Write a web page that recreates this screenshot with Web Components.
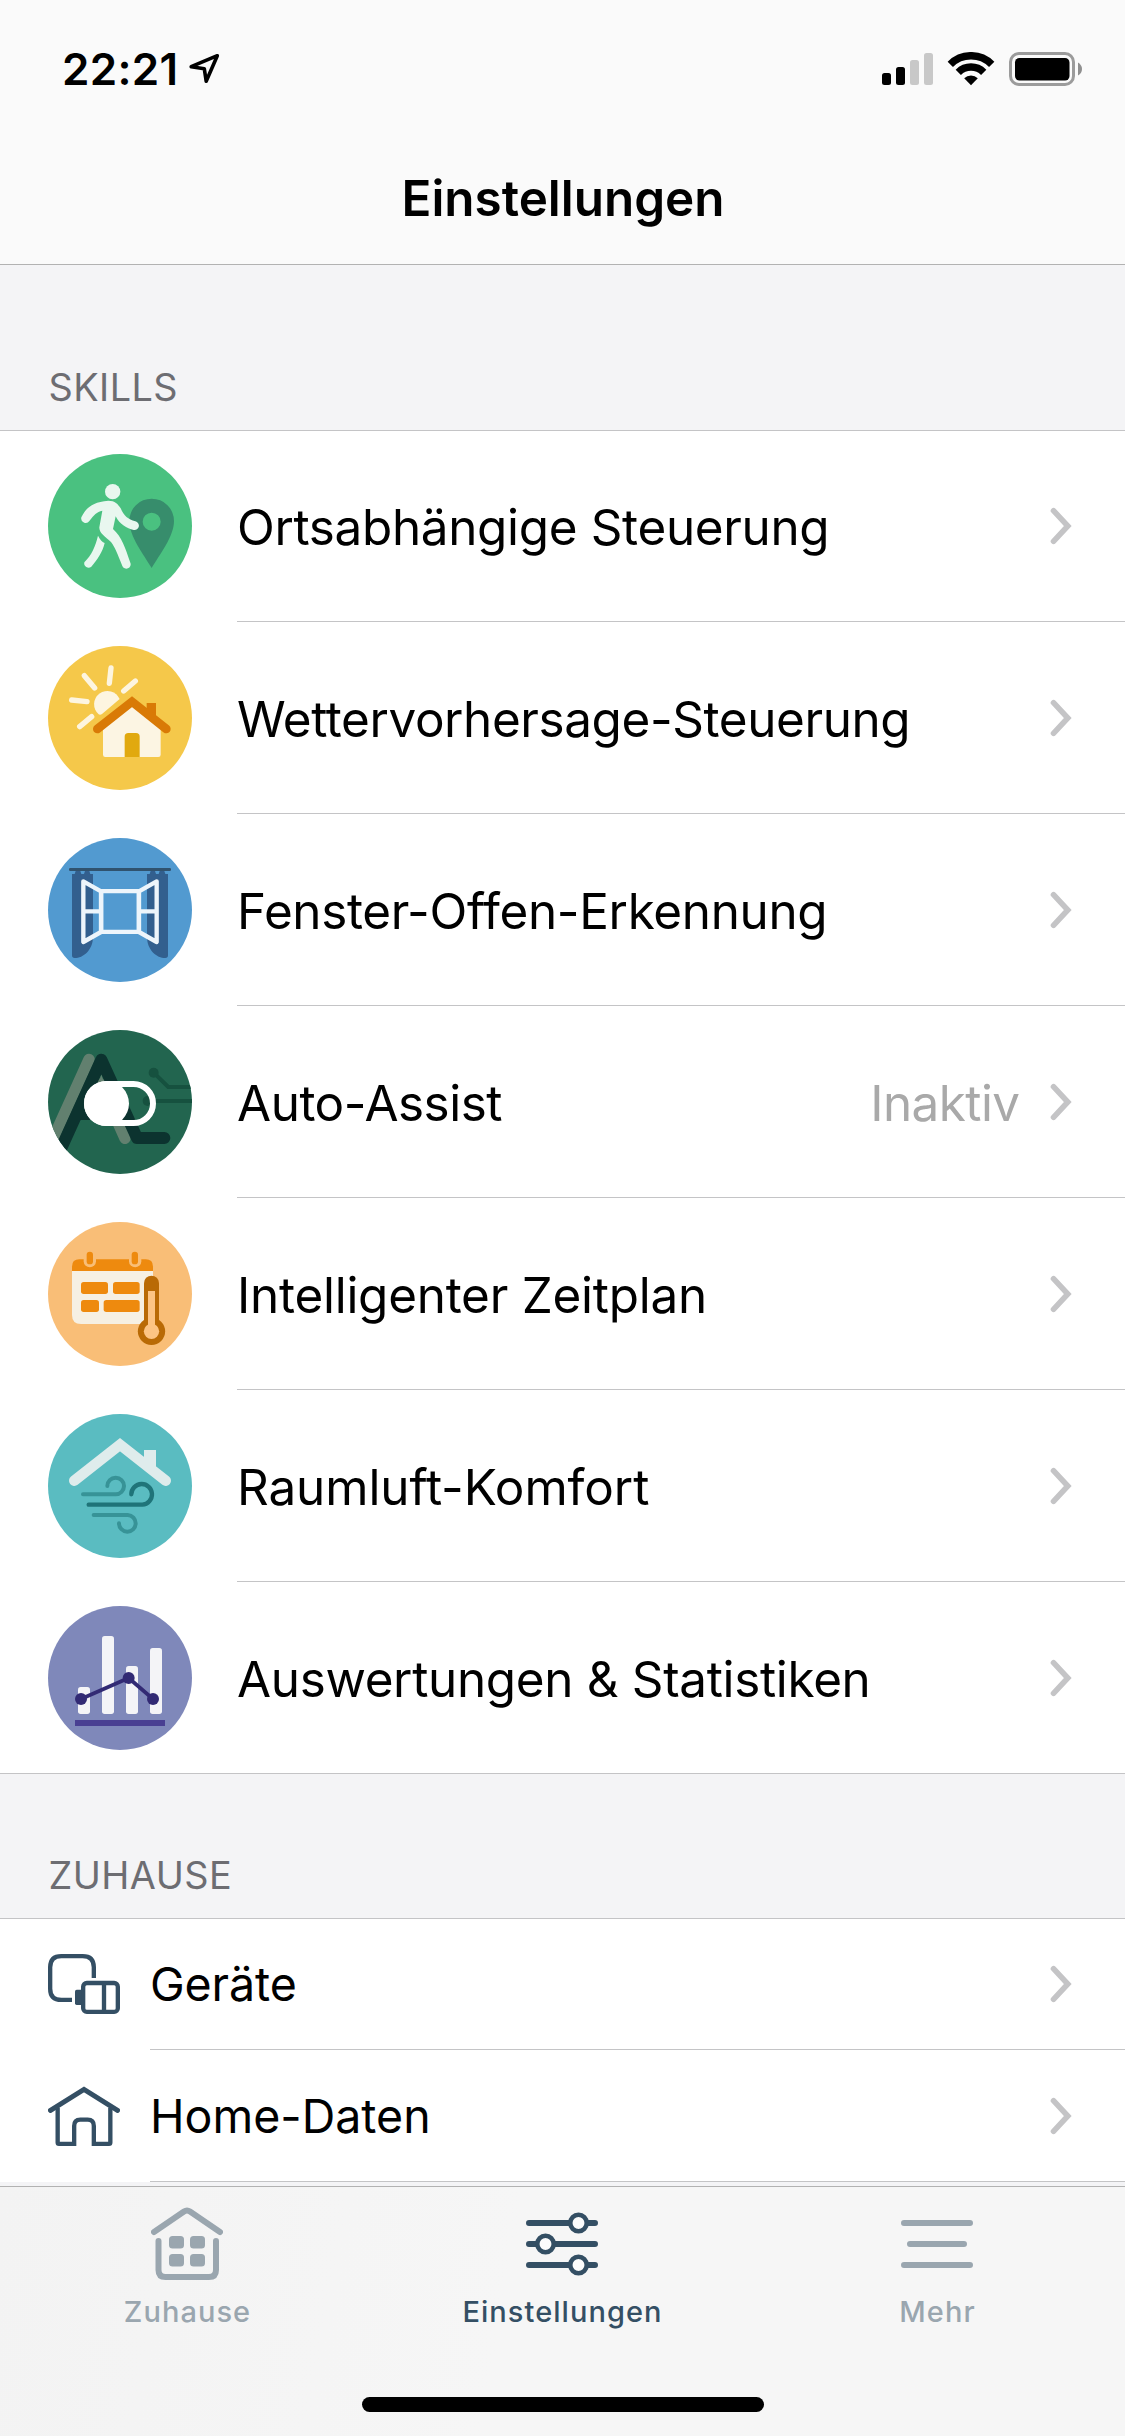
<!DOCTYPE html>
<html lang="de">
<head>
<meta charset="utf-8">
<title>Einstellungen</title>
<style>
html,body{margin:0;padding:0}
body{width:1125px;height:2436px;overflow:hidden;background:#f4f4f6;font-family:Inter,"Liberation Sans",sans-serif;color:#000}
</style>
</head>
<body>
<settings-screen></settings-screen>
<script>
const define = (name, html, setup) => customElements.define(name, class extends HTMLElement {
  connectedCallback() {
    if (this.shadowRoot) return;
    const t = document.createElement('template');
    t.innerHTML = typeof html === 'function' ? html(this) : html;
    this.attachShadow({mode: 'open'}).append(t.content.cloneNode(true));
    if (setup) setup(this);
  }
});

const skill = (y, color, body) => `<svg width="144" height="144" viewBox="54 ${y} 432 432"><circle cx="270" cy="${y + 216}" r="216" fill="${color}"/>${body}</svg>`;
const curtain = `<path fill="#325f8e" d="M126 162H134L137 153H151L154 162H162L165 153H178L181 162H189V350C189 390 160 414 134 414Q126 414 126 406Z"/>`;
const sash = `<path d="M160 184L213 214V336L160 366ZM160 274H213"/>`;

const ICONS = {
  location: skill(42, '#4ac180', `
    <path fill="#378d6c" fill-rule="evenodd" d="M365 384C342 345 298 290 298 243A67 67 0 0 1 432 243C432 290 388 345 365 384ZM338 245a27 27 0 1 0 54 0a27 27 0 1 0-54 0Z"/>
    <g fill="#e9f7ef"><circle cx="248" cy="155" r="23"/>
    <path d="M154 232C168 205 184 186 235 182C255 182 264 192 272 205C282 228 294 238 316 244A13 13 0 0 1 311 270C290 265 270 254 257 229L249 267C276 292 285 322 301 368A13 13 0 0 1 277 378C262 340 255 322 243 306C225 290 207 278 208 262L217 212C200 215 192 225 178 243A13.500 13.500 0 0 1 154 232Z"/>
    <path d="M204 287C210 300 218 306 224 309C218 335 202 360 184 380A13 13 0 0 1 163 367C185 345 196 320 204 287Z"/></g>`),
  weather: skill(618, '#f5c84a', `
    <g stroke="#fdf5e0" stroke-width="16" stroke-linecap="round"><path d="M243 684L238 730M163 707L194 744M316 723L281 753M125 780L171 785M149 860L185 830"/></g>
    <path fill="#fdf5e0" d="M269 777A40 40 0 1 0 206 823Q211 826 217 821Z"/>
    <path fill="#fcf5e3" d="M219 862L306 795L392 862V944Q392 951 385 951H226Q219 951 219 944Z"/>
    <path fill="#e1a90f" d="M284 951V890Q284 879 295 879H318Q329 879 329 890V951Z"/>
    <path fill="#d97a06" d="M350 789H378V840L350 818Z"/>
    <path fill="none" stroke="#d97a06" stroke-width="26" stroke-linecap="round" d="M202 867L306 785L409 867"/>`),
  window: skill(54, '#529ad0', `
    ${curtain}<g transform="translate(540 0) scale(-1 1)">${curtain}</g>
    <rect x="117" y="144" width="306" height="9" rx="4" fill="#30536f"/>
    <g fill="none" stroke="#edf5fb" stroke-width="13" stroke-linejoin="round"><rect x="213.500" y="213.500" width="113" height="122"/>${sash}<g transform="translate(540 0) scale(-1 1)">${sash}</g></g>`),
  assist: `<svg width="144" height="144" viewBox="54 630 432 432"><clipPath id="c"><circle cx="270" cy="846" r="216"/></clipPath><g clip-path="url(#c)"><rect x="54" y="630" width="432" height="432" fill="#22654f"/>
    <g fill="none" stroke-linecap="round" stroke-linejoin="round">
    <path stroke="#62806f" stroke-width="34" d="M177 718L56 985"/>
    <path stroke="#0c332f" stroke-width="32" d="M150 884H290"/>
    <path stroke="#62806f" stroke-width="34" d="M212 792L285 955"/>
    <path stroke="#0c332f" stroke-width="36" d="M93 986L214 719L321 954H403"/>
    <path stroke="#16513f" stroke-width="12" d="M371 758L415 801H500M353 843H500"/></g>
    <circle cx="371" cy="758" r="15" fill="#16513f"/><circle cx="353" cy="843" r="15" fill="#16513f"/>
    <path fill="#62806f" d="M214 764L222 786H206Z"/>
    <rect x="171" y="792" width="198" height="117" rx="58.500" fill="none" stroke="#fff" stroke-width="18"/>
    <circle cx="229.500" cy="850.500" r="67.500" fill="#fff"/></g></svg>`,
  schedule: skill(66, '#f9be77', `
    <path fill="#f6f0e3" d="M126 212H369V345Q369 372 342 372H153Q126 372 126 345Z"/>
    <path fill="#ee8a0e" d="M126 213V200Q126 178 148 178H347Q369 178 369 200V213Z"/>
    <g fill="#f9be77"><rect x="161" y="150" width="37" height="52" rx="18.500"/><rect x="297" y="150" width="37" height="52" rx="18.500"/></g>
    <g fill="#ee8a0e"><rect x="170" y="155" width="19" height="38" rx="9.500"/><rect x="305" y="155" width="19" height="38" rx="9.500"/>
    <rect x="153" y="246" width="81" height="36" rx="8"/><rect x="249" y="246" width="80" height="36" rx="8"/><rect x="153" y="300" width="54" height="36" rx="8"/><rect x="221" y="300" width="108" height="36" rx="8"/></g>
    <g fill="#b96a05"><rect x="342" y="227" width="45" height="160" rx="22.500"/><circle cx="364.500" cy="394" r="41"/></g>
    <g fill="#fcc484"><rect x="354" y="273" width="21" height="110"/><circle cx="364.500" cy="394" r="23"/></g>`),
  air: skill(642, '#5abcc1', `
    <path fill="#dfecec" d="M342 750H378V815L342 790Z"/>
    <g fill="none" stroke-linecap="round"><path stroke="#dfecec" stroke-width="32" d="M133 842L270 734L407 842"/>
    <g stroke="#379397" stroke-width="12"><path d="M159 883H257A25 25 0 1 0 232 858"/><path d="M191 945H293A25 25 0 1 1 267 970"/></g>
    <path stroke="#1f7479" stroke-width="13" d="M176 914H337A31 31 0 1 0 304 883"/></g>`),
  stats: skill(48, '#7f88ba', `
    <g fill="#f4f4f7"><rect x="144" y="291" width="36" height="81" rx="8"/><rect x="216" y="138" width="36" height="234" rx="8"/><rect x="288" y="228" width="36" height="144" rx="8"/><rect x="360" y="174" width="36" height="198" rx="8"/></g>
    <rect x="135" y="390" width="270" height="18" fill="#493f92"/>
    <path fill="none" stroke="#322a74" stroke-width="11" d="M153 327L296 264L369 327"/>
    <g fill="#322a74"><circle cx="153" cy="327" r="18"/><circle cx="296" cy="264" r="18"/><circle cx="369" cy="327" r="18"/></g>`),
  devices: `<svg width="72" height="60" viewBox="54 72 216 180"><g fill="none" stroke="#344f64" stroke-width="13"><path d="M191.500 144V112Q191.500 78.500 158 78.500H94Q60.500 78.500 60.500 112V176Q60.500 209.500 94 209.500H126"/><rect x="159.500" y="159" width="104" height="86.500" rx="11"/><path d="M222 159V246"/></g><path fill="#344f64" d="M154 179H140Q135 179 135 184V220Q135 225 140 225H154Z"/></svg>`,
  home: `<svg width="72" height="60" viewBox="54 468 216 180"><g fill="none" stroke="#344f64" stroke-width="13"><path d="M83 533V637.500Q83 641.500 87 641.500H132.500V588Q132.500 569 151 569H173Q191.500 569 191.500 588V641.500H237Q241 641.500 241 637.500V533"/><path stroke-width="15" stroke-linecap="round" d="M61.500 541L162 478L262.500 541"/></g></svg>`
};

define('skill-icon', el => `<style>:host{display:flex;flex:none}svg{display:block}</style>${ICONS[el.getAttribute('name')]}`);

define('status-bar', `<style>
:host{display:flex;justify-content:space-between;align-items:flex-start;height:138px;box-sizing:border-box;padding:52px 43px 0 62px}
.time{display:flex;align-items:flex-start}
.time span{font-weight:600;font-size:44px;line-height:54px;letter-spacing:.31px;margin-top:-10px;width:126px}
svg{display:block}
</style>
<div class="time"><span>22:21</span><svg width="32" height="34" viewBox="188 52 32 34"><path d="M217.300 55.700L191.200 66.700L204.300 68.800L206.200 81.300Z" fill="none" stroke="#000" stroke-width="3.600" stroke-linejoin="round"/></svg></div>
<svg width="200" height="34" viewBox="882 52 200 34">
<rect x="882" y="73" width="9" height="12" rx="2.500"/><rect x="896" y="67" width="9" height="18" rx="2.500"/>
<g fill="#c8c8c8"><rect x="910" y="60" width="9" height="25" rx="2.500"/><rect x="924" y="53" width="9" height="32" rx="2.500"/></g>
<g fill="none" stroke="#000" stroke-width="7.500"><path d="M950.300 64.300A29.300 29.300 0 0 1 991.700 64.300"/><path d="M958.300 72.300A18 18 0 0 1 983.700 72.300"/></g><path d="M971 85.200L964.200 78.200A9.800 9.800 0 0 1 977.800 78.200Z"/>
<rect x="1010.500" y="53.500" width="63" height="31" rx="8.500" fill="none" stroke="#9b9b9b" stroke-width="3"/><rect x="1015" y="58" width="54.500" height="22.500" rx="4.500"/>
<path fill="#8f8f8f" d="M1078 62.500Q1082 65 1082 69T1078 75.500Z"/></svg>`);

define('nav-header', `<style>
:host{display:flex;flex-direction:column;height:265px;box-sizing:border-box;background:#fafafa;border-bottom:1px solid #b2b2b2}
h1{margin:0;text-align:center;font-weight:600;font-size:49.400px;line-height:60px;letter-spacing:0;padding-top:30px;padding-left:1px}
</style><status-bar></status-bar><h1><slot></slot></h1>`);

define('section-title', `<style>
:host{display:flex;align-items:flex-end;height:var(--h);box-sizing:border-box;padding:0 48.500px 20.500px;color:#6d6d72;font-size:37.800px;line-height:46px;letter-spacing:.45px}
</style><slot></slot>`);

define('settings-list', `<style>
:host{display:block;background:#fff;box-shadow:inset 0 1px #c4c4c6}
</style><slot></slot>`);

define('settings-row', el => `<style>
:host{display:flex;height:192px;padding-left:48px;gap:45px;--label:49.400px;--drop:3px}
:host([small]){height:132px;gap:30px;--label:46.500px;--drop:1px}
skill-icon{align-self:center}
.main{flex:1;display:flex;align-items:center;box-sizing:border-box;border-bottom:1px solid #c4c4c6;padding-right:53px}
:host([last]){box-shadow:inset 0 -1px #c4c4c6}
:host([last]) .main{border-color:transparent}
.label,.detail{font-size:var(--label);line-height:60px;padding-top:var(--drop);white-space:nowrap}
.label{flex:1;letter-spacing:${el.getAttribute('track') || 0}px}
.detail{color:#a9a9a9;letter-spacing:-.57px;margin-right:30.500px}
svg{display:block;flex:none}
</style><skill-icon name="${el.getAttribute('icon')}"></skill-icon>
<div class="main"><div class="label"><slot></slot></div><div class="detail"><slot name="detail"></slot></div>
<svg width="22" height="38" viewBox="0 0 22 38"><path d="M3.500 3.700L17.800 19L3.500 34.300" fill="none" stroke="#c4c4c6" stroke-width="5.600" stroke-linecap="round"/></svg></div>`);

const TABS = {
  home: `<svg width="72" height="74" viewBox="151 2207 72 74"><g fill="none" stroke="#9aa6af" stroke-width="6" stroke-linecap="round"><path d="M154 2232L184 2211.500Q187 2209.500 190 2211.500L220 2232"/><path d="M158.500 2241V2270Q158.500 2277 165.500 2277H209Q216 2277 216 2270V2241"/></g><g fill="#9aa6af"><rect x="169" y="2236" width="15" height="12.500" rx="3.500"/><rect x="190" y="2236" width="15" height="12.500" rx="3.500"/><rect x="169" y="2254" width="15" height="12.500" rx="3.500"/><rect x="190" y="2254" width="15" height="12.500" rx="3.500"/></g></svg>`,
  sliders: `<svg width="72" height="74" viewBox="526 2207 72 74"><g fill="none" stroke="#344f64" stroke-width="6" stroke-linecap="round"><path d="M529 2223H595M529 2244H595M529 2265H595"/></g><g fill="#fcfcfc" stroke="#344f64" stroke-width="4.500"><circle cx="578.500" cy="2223" r="8.200"/><circle cx="545.500" cy="2244" r="8.200"/><circle cx="578.500" cy="2265" r="8.200"/></g></svg>`,
  more: `<svg width="72" height="74" viewBox="901 2207 72 74"><path fill="none" stroke="#9aa6af" stroke-width="6" stroke-linecap="round" d="M904 2223H970M910 2244H964M904 2265H970"/></svg>`
};

define('tab-item', el => `<style>
:host{flex:1;display:flex;flex-direction:column;align-items:center;color:#9aa6af;font-weight:500;font-size:29px;line-height:36px;letter-spacing:1.050px}
:host([active]){color:#344f64}
svg{display:block;margin-right:1px}
span{margin-top:13px}
</style>${TABS[el.getAttribute('icon')]}<span><slot></slot></span>`);

define('tab-bar', `<style>
:host{display:flex;flex-direction:column;height:250px;box-sizing:border-box;background:linear-gradient(100deg,#f3f3f3,#f6f6f6 45%,#f6f6f6);border-top:1px solid #b2b2b2;padding-top:20px}
.tabs{display:flex;height:190px}
.indicator{width:402px;height:15px;border-radius:7.500px;background:#000;align-self:center}
</style><div class="tabs"><slot></slot></div><div class="indicator"></div>`);

define('settings-screen', `<style>
:host{display:flex;flex-direction:column;height:2436px;background:#f4f4f6}
main{flex:1;min-height:0;overflow:hidden}
</style>
<nav-header>Einstellungen</nav-header>
<main>
<section-title style="--h:165px">SKILLS</section-title>
<settings-list>
<settings-row icon="location" track="-.32">Ortsabhängige Steuerung</settings-row>
<settings-row icon="weather" track="-.38">Wettervorhersage-Steuerung</settings-row>
<settings-row icon="window" track="-.32">Fenster-Offen-Erkennung</settings-row>
<settings-row icon="assist" track="-.45">Auto-Assist<span slot="detail">Inaktiv</span></settings-row>
<settings-row icon="schedule" track="-.24">Intelligenter Zeitplan</settings-row>
<settings-row icon="air" track="-.08">Raumluft-Komfort</settings-row>
<settings-row icon="stats" track="-.31" last>Auswertungen &amp; Statistiken</settings-row>
</settings-list>
<section-title style="--h:144px">ZUHAUSE</section-title>
<settings-list>
<settings-row small icon="devices" track="-.1">Geräte</settings-row>
<settings-row small icon="home" track="0">Home-Daten</settings-row>
</settings-list>
</main>
<tab-bar>
<tab-item icon="home">Zuhause</tab-item>
<tab-item icon="sliders" active>Einstellungen</tab-item>
<tab-item icon="more">Mehr</tab-item>
</tab-bar>`);
</script>
</body>
</html>
